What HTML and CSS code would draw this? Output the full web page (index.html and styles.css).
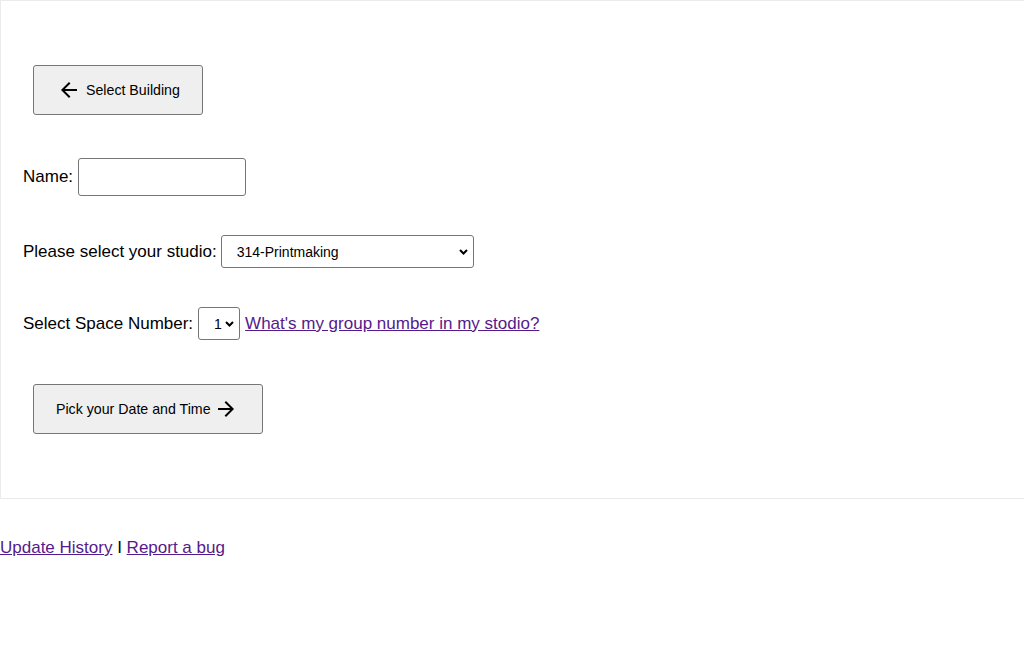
FILE: index.html
```html
<!DOCTYPE html>
<html lang="en">
<head>
<meta charset="utf-8">
<title>Studio Booking</title>
<link rel="stylesheet" href="styles.css">
</head>
<body>
<div class="panel">
  <button class="btn btn-back" type="button">
    <svg class="arrow" viewBox="0 0 24 24" width="24" height="24"><path d="M20 11H7.83l5.59-5.59L12 4l-8 8 8 8 1.41-1.41L7.83 13H20v-2z"/></svg>
    <span>Select Building</span>
  </button>

  <div class="row row-name">
    <label for="name">Name:</label>
    <input id="name" class="text-input" type="text">
  </div>

  <div class="row row-studio">
    <label for="studio">Please select your studio:</label>
    <span class="select-wrap select-studio">
      <select id="studio"><option>314-Printmaking</option></select>
      <svg class="chev" viewBox="0 0 9 6" width="9" height="6"><path d="M1 1 L4.5 4.5 L8 1" fill="none" stroke="#000" stroke-width="2"/></svg>
    </span>
  </div>

  <div class="row row-space">
    <label for="space">Select Space Number:</label>
    <span class="select-wrap select-space">
      <select id="space"><option>1</option></select>
      <svg class="chev" viewBox="0 0 9 6" width="9" height="6"><path d="M1 1 L4.5 4.5 L8 1" fill="none" stroke="#000" stroke-width="2"/></svg>
    </span>
    <a href="#" class="link">What's my group number in my stodio?</a>
  </div>

  <button class="btn btn-next" type="button">
    <span>Pick your Date and Time</span>
    <svg class="arrow" viewBox="0 0 24 24" width="24" height="24"><path d="M12 4l-1.41 1.41L16.17 11H4v2h12.17l-5.58 5.59L12 20l8-8z"/></svg>
  </button>
</div>

<div class="footer">
  <a href="#" class="link">Update History</a> I <a href="#" class="link">Report a bug</a>
</div>
</body>
</html>
```

FILE: styles.css
```css
html, body {
  margin: 0;
  padding: 0;
  background: #fff;
}

body {
  font-family: "Liberation Sans", Arial, Helvetica, sans-serif;
  font-size: 17px;
  color: #000;
}

.panel {
  display: flex;
  flex-direction: column;
  align-items: flex-start;
  border-style: solid;
  border-color: #ebebeb;
  border-width: 1px 0 1px 1px;
  padding: 64px 0 64px 22px;
}

.btn {
  display: flex;
  align-items: center;
  height: 50px;
  margin-left: 10px;
  padding: 0 23px;
  background: #efefef;
  border: 1px solid #767676;
  border-radius: 3px;
  font-family: "Liberation Sans", Arial, Helvetica, sans-serif;
  font-size: 14.2px;
  color: #000;
  cursor: pointer;
}

.btn-back {
  gap: 5px;
  padding: 0 22px 0 23px;
}

.btn-next {
  gap: 3px;
  padding: 0 24px 0 22px;
  margin-top: 44px;
}

.arrow {
  display: block;
  fill: #000;
}

.row {
  display: flex;
  align-items: center;
  gap: 5px;
}

.row-name {
  margin-top: 43px;
}

.row-studio {
  margin-top: 39px;
  gap: 4px;
}

.row-space {
  margin-top: 39px;
}

.text-input {
  box-sizing: border-box;
  width: 168px;
  height: 38px;
  margin: 0;
  border: 1px solid #767676;
  border-radius: 3px;
  font-size: 16px;
  padding: 0 6px;
}

.select-wrap {
  position: relative;
  display: block;
}

.select-wrap select {
  box-sizing: border-box;
  display: block;
  height: 33px;
  margin: 0;
  padding: 0 0 0 15px;
  border: 1px solid #767676;
  border-radius: 3px;
  background: #fff;
  font-family: "Liberation Sans", Arial, Helvetica, sans-serif;
  font-size: 14px;
  color: #000;
  -webkit-appearance: none;
  appearance: none;
}

.select-studio select {
  width: 253px;
}

.select-space select {
  width: 42px;
}

.chev {
  position: absolute;
  right: 6px;
  top: 50%;
  margin-top: -3px;
  pointer-events: none;
}

.link {
  color: #551a8b;
  text-decoration: underline;
}

.footer {
  margin-top: 39px;
  line-height: 20px;
}
```
